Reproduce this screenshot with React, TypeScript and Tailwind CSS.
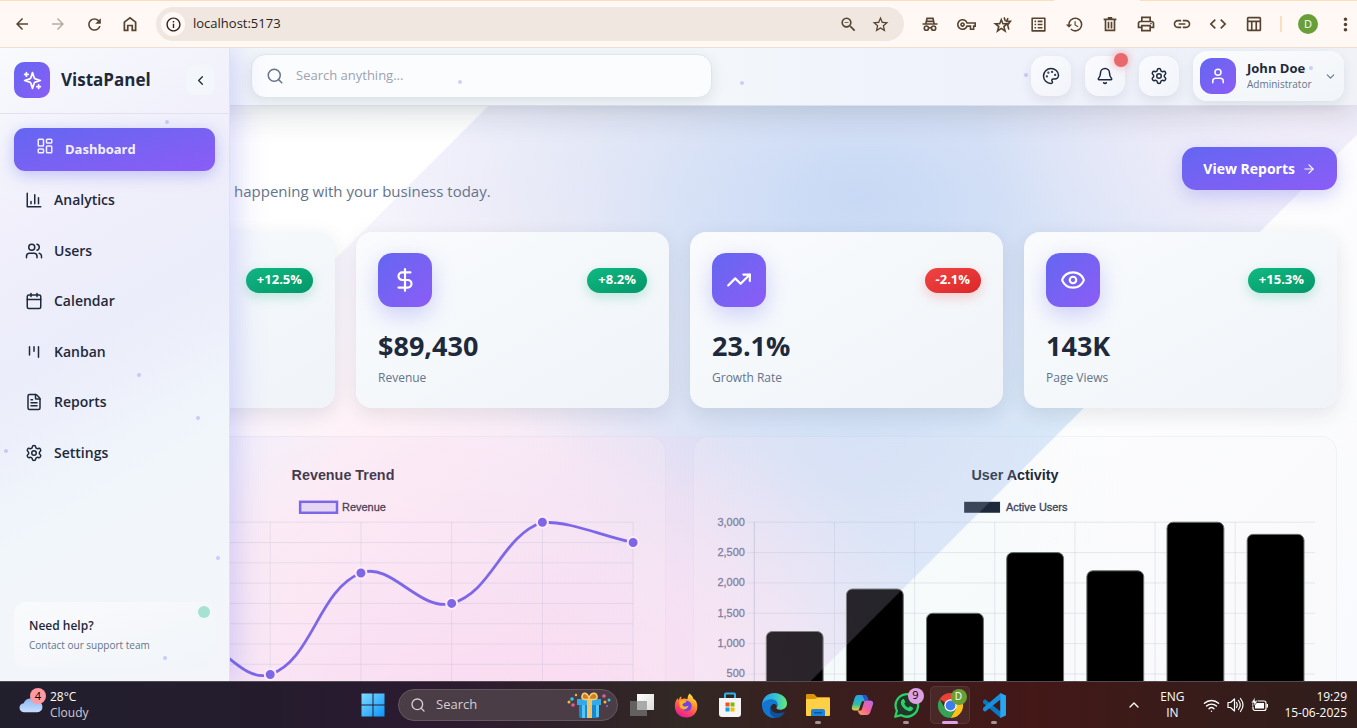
import type { ReactNode } from 'react';
import {
  ArrowRight, Bell, Calendar, ChevronDown, ChevronLeft, ChevronUp, DollarSign, Eye, FileText,
  LayoutDashboard, Palette, Search, Settings, TrendingUp, User, Users, Wifi,
} from 'lucide-react';
import {
  MdArrowBack, MdArrowForward, MdCode, MdHistory, MdInfoOutline, MdLink, MdListAlt, MdMoreVert,
  MdOutlinePrint, MdOutlineVpnKey, MdRefresh, MdStarBorder, MdZoomOut,
} from 'react-icons/md';

/* ---------- Small line icons ---------- */

function Line({ size = 18, width = 2, round = true, children }: { size?: number; width?: number; round?: boolean; children: ReactNode }) {
  return (
    <svg width={size} height={size} viewBox="0 0 24 24" fill="none" stroke="currentColor" strokeWidth={width}
      strokeLinecap={round ? 'round' : 'butt'} strokeLinejoin={round ? 'round' : 'miter'} aria-hidden="true">
      {children}
    </svg>
  );
}

const HomeIcon = () => <Line size={18} width={2.3} round={false}><path d="M4.500 20.500V9.500L12 3.800l7.500 5.700v11h-4.500V14h-6v6.500z" /></Line>;
const IncognitoIcon = () => (
  <Line size={18} width={2.2} round={false}>
    <path d="M2 12h20M6.500 11.500 8 4.500h8l1.500 7M7 8.500h10" />
    <circle cx="7.200" cy="17.500" r="2.800" /><circle cx="16.800" cy="17.500" r="2.800" /><path d="M10 17h4" />
  </Line>
);
const StarSparkIcon = () => (
  <Line size={19} width={2} round={false}>
    <path d="m10.500 6 2 5h5.500l-4.300 3.600 1.600 5.600-4.800-3.300-4.800 3.300 1.600-5.600L3 11h5.500z" />
    <path d="m14 3 1.500 4.500M19 4l-2 4h5l-3.500 4.500 1.500 6" />
  </Line>
);
const BinIcon = () => <Line size={18} width={2.2} round={false}><path d="M6 6.500V20.500h12V6.500M3.500 5.800h17M9 3.800h6M10 9v9M14 9v9" /></Line>;
const TableIcon = () => <Line size={18} width={2.2} round={false}><rect x="3.500" y="3.500" width="17" height="17" rx="1" /><path d="M3.500 8.500h17M9 8.500v12M15 8.500v12" /></Line>;
const SparklesIcon = () => (
  <Line size={21}>
    <path d="m12 3-1.912 5.813a2 2 0 0 1-1.275 1.275L3 12l5.813 1.912a2 2 0 0 1 1.275 1.275L12 21l1.912-5.813a2 2 0 0 1 1.275-1.275L21 12l-5.813-1.912a2 2 0 0 1-1.275-1.275L12 3Z" />
    <path d="M5 3v4M19 17v4M3 5h4M17 19h4" />
  </Line>
);
const AnalyticsIcon = () => <Line><path d="M3 3v18h18M18 17V9M13 17V5M8 17v-3" /></Line>;
const KanbanIcon = () => <Line><path d="M6 5v11M12 5v6M18 5v14" /></Line>;

/* ---------- Browser toolbar ---------- */

function ToolButton({ label, children, dim = false }: { label: string; children: ReactNode; dim?: boolean }) {
  return (
    <button aria-label={label} className={`flex size-9 shrink-0 items-center justify-center ${dim ? 'text-[#b5aca6]' : 'text-[#574430]'}`}>
      {children}
    </button>
  );
}

function BrowserBar() {
  return (
    <header className="relative flex h-12 shrink-0 items-center border-t border-b border-t-[#ffdcbc] border-b-[#f3ddd0] bg-[#fff8f4] pl-1">
      <div className="absolute -top-px left-[1054px] h-px w-[86px] bg-[#fff8f4]" />
      <ToolButton label="Back"><MdArrowBack size={18} /></ToolButton>
      <ToolButton label="Forward" dim><MdArrowForward size={18} /></ToolButton>
      <ToolButton label="Reload"><MdRefresh size={19} /></ToolButton>
      <ToolButton label="Home"><HomeIcon /></ToolButton>
      <div className="ml-2 flex h-[34px] flex-1 items-center rounded-full bg-[#f0e7e1] pr-2 pl-[5px]">
        <span className="flex size-6 items-center justify-center rounded-full bg-[#fff8f4] text-[#2b2320]"><MdInfoOutline size={17} /></span>
        <input aria-label="Address" defaultValue="localhost:5173" className="ml-2 min-w-0 flex-1 bg-transparent text-[13px] text-[#2a2320] outline-none" />
        <button aria-label="Zoom out" className="flex w-8 justify-center text-[#574430]"><MdZoomOut size={19} /></button>
        <button aria-label="Bookmark" className="flex w-8 justify-center text-[#574430]"><MdStarBorder size={19} /></button>
      </div>
      <div className="ml-2 flex">
        <ToolButton label="Incognito"><IncognitoIcon /></ToolButton>
        <ToolButton label="Passwords"><MdOutlineVpnKey size={19} /></ToolButton>
        <ToolButton label="Bookmarks"><StarSparkIcon /></ToolButton>
        <ToolButton label="Reading list"><MdListAlt size={19} /></ToolButton>
        <ToolButton label="History"><MdHistory size={19} /></ToolButton>
        <ToolButton label="Delete data"><BinIcon /></ToolButton>
        <ToolButton label="Print"><MdOutlinePrint size={20} /></ToolButton>
        <ToolButton label="Copy link"><MdLink size={20} /></ToolButton>
        <ToolButton label="Developer tools"><MdCode size={20} /></ToolButton>
        <ToolButton label="Side panel"><TableIcon /></ToolButton>
      </div>
      <div className="ml-2 h-4 w-0.5 bg-[#ffdcbc]" />
      <button aria-label="Profile" className="ml-4 flex size-5 items-center justify-center rounded-full bg-[#689f38] text-[11px] text-white">D</button>
      <button aria-label="More" className="ml-4 flex w-[23px] justify-center text-[#574430]"><MdMoreVert size={21} /></button>
    </header>
  );
}

/* ---------- Sidebar ---------- */

const NAV: { label: string; icon: ReactNode }[] = [
  { label: 'Analytics', icon: <AnalyticsIcon /> },
  { label: 'Users', icon: <Users size={18} /> },
  { label: 'Calendar', icon: <Calendar size={18} /> },
  { label: 'Kanban', icon: <KanbanIcon /> },
  { label: 'Reports', icon: <FileText size={18} /> },
  { label: 'Settings', icon: <Settings size={18} /> },
];

function Sidebar() {
  return (
    <aside className="absolute inset-y-0 left-0 z-20 flex w-[230px] flex-col border-r border-[#dfe3ee] bg-[linear-gradient(150deg,#f8fafd_0%,#f0effb_26%,#ebedfa_45%,#f1f6fb_66%,#f3f5fa_100%)] shadow-[6px_0_28px_rgba(99,102,241,0.26)]">
      <div className="flex h-[66px] shrink-0 items-center border-b border-[#e0e3ee] px-3.5 pb-px">
        <span className="flex size-9 items-center justify-center rounded-[10px] bg-linear-to-br from-[#6366f1] to-[#8b5cf6] text-white"><SparklesIcon /></span>
        <span className="ml-[11px] text-[17px] font-bold text-[#1e293b]">VistaPanel</span>
        <button aria-label="Collapse sidebar" className="ml-auto flex size-[29px] items-center justify-center rounded-lg bg-[#f3f6fa] text-[#1e293b]"><ChevronLeft size={15} /></button>
      </div>
      <nav className="mx-3.5 mt-3.5 flex h-[346px] shrink-0 flex-col justify-between text-sm font-semibold text-[#1e293b]">
        <a href="#dashboard" className="flex h-[43px] items-center gap-[11px] rounded-[11px] bg-linear-to-br from-[#6366f1] to-[#8b5cf6] pl-[22px] text-[13px] font-bold text-[#f3f1ff] shadow-[0_4px_16px_rgba(99,102,241,0.35)]">
          <span className="self-start pt-[9px]"><LayoutDashboard size={18} /></span>
          Dashboard
        </a>
        {NAV.map((item) => (
          <a key={item.label} href={`#${item.label.toLowerCase()}`} className="flex h-[43px] items-center gap-[11px] pl-[11px]">
            {item.icon}
            {item.label}
          </a>
        ))}
      </nav>
      <div className="relative mx-3.5 mt-auto mb-[13px] rounded-xl bg-linear-to-br from-[#f9fafc] to-[#f1f5f9] px-[15px] py-3.5">
        <span className="absolute top-1 right-[5px] size-3 rounded-full bg-[#a5e3d0]" />
        <p className="text-xs leading-5 font-semibold text-[#1e293b]">Need help?</p>
        <p className="text-[10px] leading-[18px] text-[#64748b]">Contact our support team</p>
      </div>
    </aside>
  );
}

/* ---------- App header ---------- */

const ICON_BUTTON = 'flex size-10 items-center justify-center rounded-[14px] bg-linear-to-br from-[#fafbfe] to-[#f1f4fa] text-[#1e293b] shadow-[0_4px_12px_rgba(30,41,59,0.09)]';

function TopBar() {
  return (
    <header className="relative z-10 flex h-[58px] items-center border-b border-[#dbe1ec] bg-[linear-gradient(90deg,#f3f7fa_0%,#f3f7fa_52%,#f0f3fc_65%,#eef0fa_80%,#f0f2f8_100%)] pr-[13px] pb-px pl-[251px] shadow-[0_8px_30px_rgba(30,41,59,0.16)]">
      <label className="flex h-11 w-[461px] items-center gap-3 rounded-[14px] border border-[#dde6ef] bg-[#fbfcfe] px-[14px] text-[#64748b] shadow-[0_4px_14px_rgba(30,41,59,0.10)]">
        <Search size={18} />
        <input placeholder="Search anything..." aria-label="Search anything" className="min-w-0 flex-1 bg-transparent text-[13px] outline-none placeholder:text-[#9ca3af]" />
      </label>
      <div className="ml-auto flex items-center gap-3.5">
        <button aria-label="Theme" className={ICON_BUTTON}><Palette size={18} /></button>
        <button aria-label="Notifications" className={`relative ${ICON_BUTTON}`}>
          <Bell size={18} />
          <span className="absolute -top-[3px] -right-[3px] size-3.5 rounded-full bg-[#e9686c] shadow-[0_0_8px_rgba(239,68,68,0.5)]" />
        </button>
        <button aria-label="Settings" className={ICON_BUTTON}><Settings size={18} /></button>
        <button className="flex h-[50px] items-center rounded-[14px] bg-linear-to-br from-[#fafbfd] to-[#f1f5f9] px-[7px] text-left shadow-[0_4px_12px_rgba(30,41,59,0.09)]">
          <span className="flex size-9 items-center justify-center rounded-xl bg-linear-to-br from-[#6366f1] to-[#8b5cf6] text-white"><User size={18} /></span>
          <span className="ml-[11px] w-[72px]">
            <span className="block text-[13px] leading-4 font-bold whitespace-nowrap text-[#1e293b]">John Doe</span>
            <span className="block text-[10px] leading-4 text-[#64748b]">Administrator</span>
          </span>
          <ChevronDown size={13} className="ml-[5px] text-[#64748b]" />
        </button>
      </div>
    </header>
  );
}

/* ---------- Stat cards ---------- */

type Stat = { icon: ReactNode; change: string; up: boolean; value: string; label: string };

const STATS: Stat[] = [
  { icon: <DollarSign size={26} />, change: '+8.2%', up: true, value: '$89,430', label: 'Revenue' },
  { icon: <TrendingUp size={26} />, change: '-2.1%', up: false, value: '23.1%', label: 'Growth Rate' },
  { icon: <Eye size={26} />, change: '+15.3%', up: true, value: '143K', label: 'Page Views' },
];

function Badge({ up, children }: { up: boolean; children: ReactNode }) {
  return (
    <span className={`ml-auto flex h-[25px] items-center rounded-full px-[11px] text-[13px] font-bold text-white ${up
      ? 'bg-linear-to-br from-[#10b981] to-[#059669] shadow-[0_4px_12px_rgba(16,185,129,0.25)]'
      : 'bg-linear-to-br from-[#ef4444] to-[#dc2626] shadow-[0_4px_12px_rgba(239,68,68,0.25)]'}`}>
      {children}
    </span>
  );
}

const CARD = 'h-44 rounded-2xl bg-linear-to-br from-[#fafbfd] via-[#f4f8fb] to-[#f0f3f8] px-[22px] pt-[21px] shadow-[0_6px_20px_rgba(30,41,59,0.11)]';

function StatCard({ stat }: { stat: Stat }) {
  return (
    <section className={CARD}>
      <div className="flex h-[54px] items-center">
        <span className="flex size-[54px] items-center justify-center rounded-[14px] bg-linear-to-br from-[#6366f1] to-[#8b5cf6] text-white shadow-[0_8px_22px_rgba(99,102,241,0.28)]">{stat.icon}</span>
        <Badge up={stat.up}>{stat.change}</Badge>
      </div>
      <p className="mt-[21px] text-[27px] leading-9 font-bold text-[#1e293b]">{stat.value}</p>
      <p className="mt-1 text-xs leading-5 text-[#64748b]">{stat.label}</p>
    </section>
  );
}

/* ---------- Charts ---------- */

const PANEL = 'overflow-hidden rounded-2xl border border-[#94a3b8]/10 bg-[#f8fafc]/20';
const CHART_FONT = "font-['Liberation_Sans',sans-serif]";
const TOP = 85;

type Point = { x: number; y: number };

function smoothPath(points: Point[], top: number): string {
  const tension = 0.4;
  const handles = points.map((p, i) => {
    const prev = points[Math.max(0, i - 1)];
    const next = points[Math.min(points.length - 1, i + 1)];
    const d1 = Math.hypot(p.x - prev.x, p.y - prev.y);
    const d2 = Math.hypot(next.x - p.x, next.y - p.y);
    const a = (tension * d1) / (d1 + d2);
    const b = (tension * d2) / (d1 + d2);
    return {
      before: { x: p.x - a * (next.x - prev.x), y: Math.max(top, p.y - a * (next.y - prev.y)) },
      after: { x: p.x + b * (next.x - prev.x), y: Math.max(top, p.y + b * (next.y - prev.y)) },
    };
  });
  return points.reduce((d, p, i) => {
    if (i === 0) return `M${p.x} ${p.y}`;
    const c1 = handles[i - 1].after;
    const c2 = handles[i].before;
    return `${d}C${c1.x} ${c1.y} ${c2.x} ${c2.y} ${p.x} ${p.y}`;
  }, '');
}

const REVENUE = [12000, 19000, 15000, 25000, 22000, 30000, 28000];
const USERS = [1200, 1900, 1500, 2500, 2200, 3000, 2800];

function RevenueChart() {
  const left = 66;
  const step = 91;
  const points = REVENUE.map((v, i) => ({ x: left + i * step, y: TOP + 0.5 + (30000 - v) * 0.01018 }));
  const line = smoothPath(points, TOP + 0.5);
  return (
    <section className={PANEL}>
      <svg viewBox="0 0 644 320" className={`block w-full ${CHART_FONT}`} role="img" aria-label="Revenue trend line chart">
        <defs>
          <linearGradient id="area" x1="0" y1="0" x2="1" y2="1">
            <stop offset="0" stopColor="#8b5cf6" stopOpacity="0.01" /><stop offset="1" stopColor="#a855f7" stopOpacity="0.02" />
          </linearGradient>
        </defs>
        <text x="321" y="43" textAnchor="middle" fontSize="14.400" fontWeight="700" fill="#1e1a30">Revenue Trend</text>
        <rect x="278" y="65" width="37" height="11" fill="#e4d8f3" stroke="#6352e6" strokeWidth="2.500" />
        <text x="320" y="74" fontSize="11" fill="#251f38" stroke="#251f38" strokeWidth="0.300">Revenue</text>
        <g stroke="#94a3b8" strokeOpacity="0.220">
          {Array.from({ length: 12 }, (_, i) => <path key={i} d={`M${left} ${TOP + 0.5 + i * 20.36}H612`} />)}
          {points.map((p) => <path key={p.x} d={`M${p.x} ${TOP}V320`} />)}
        </g>
        <path d={`${line}V320H${left}Z`} fill="url(#area)" />
        <path d={line} fill="none" stroke="#6352e6" strokeWidth="2.800" />
        {points.map((p) => <circle key={p.x} cx={p.x} cy={p.y} r="5.500" fill="#6352e6" stroke="#fff0fc" strokeWidth="2" />)}
      </svg>
    </section>
  );
}

function ActivityChart() {
  const left = 60.5;
  const step = 80.4;
  return (
    <section className={PANEL}>
      <svg viewBox="0 0 644 320" className={`block w-full ${CHART_FONT}`} role="img" aria-label="User activity bar chart">
        <text x="322" y="43" textAnchor="middle" fontSize="14.400" fontWeight="700" fill="#1e293b">User Activity</text>
        <rect x="271" y="65" width="36" height="11" fill="#1e293b" />
        <text x="313" y="74" fontSize="11" fill="#374359" stroke="#374359" strokeWidth="0.300">Active Users</text>
        <g stroke="#94a3b8" strokeOpacity="0.220">
          {[0, 1, 2, 3, 4, 5].map((i) => <path key={i} d={`M${left - 7} ${TOP + 0.5 + i * 30.45}H623`} />)}
          {[1, 2, 3, 4, 5, 6].map((i) => <path key={i} d={`M${left + i * step} ${TOP}V320`} />)}
          <path d={`M${left} ${TOP}V320`} strokeOpacity="0.450" />
        </g>
        <g fontSize="11" fill="#67708f" stroke="#67708f" strokeWidth="0.300" textAnchor="end">
          {['3,000', '2,500', '2,000', '1,500', '1,000', '500'].map((t, i) => <text key={t} x="51" y={TOP + 4 + i * 30.45}>{t}</text>)}
        </g>
        {USERS.map((v, i) => (
          <rect key={i} x={left + 12 + i * step} y={TOP + 0.5 + (3000 - v) * 0.0609} width="57" height="300" rx="6" fill="#000" stroke="#667068" strokeWidth="1" />
        ))}
      </svg>
    </section>
  );
}

/* ---------- Ambient background ---------- */

const PARTICLES = [
  { x: 167, y: 74 }, { x: 139, y: 327 }, { x: 198, y: 370 }, { x: 6, y: 403 }, { x: 218, y: 510 },
  { x: 165, y: 610 }, { x: 460, y: 34 }, { x: 742, y: 35 }, { x: 1026, y: 27 }, { x: 1311, y: 20 },
];

function Backdrop() {
  return (
    <div className="absolute inset-0 bg-[linear-gradient(135deg,#ffffff_0%,#fefefe_60%,#f9fafd_100%)]">
      <div className="absolute inset-0 bg-[radial-gradient(ellipse_400px_340px_at_740px_540px,#dcf6f266_0%,transparent_100%)]" />
      <div className="absolute inset-0 bg-[radial-gradient(ellipse_330px_260px_at_1310px_60px,#f4effb_0%,#eeebf9cc_50%,transparent_100%),radial-gradient(ellipse_500px_320px_at_860px_150px,#c8d9f5_0%,#d2e0f6cc_40%,transparent_100%),radial-gradient(ellipse_460px_330px_at_520px_680px,#ffd8ee_0%,#fde3f299_55%,transparent_100%),radial-gradient(ellipse_300px_300px_at_860px_380px,#d0e0f5_0%,transparent_100%),linear-gradient(135deg,#f7f4fc_28%,#fff2f7_38%,#f8eef8_44%,#e7e6f6_56%,#e0f0fb_72%)] [mask-image:linear-gradient(135deg,transparent_27.4%,black_27.5%,black_72.5%,transparent_72.6%)]" />
    </div>
  );
}

function Dashboard() {
  return (
    <div className="relative min-h-0 flex-1 overflow-hidden">
      <Backdrop />
      <Sidebar />
      <div className="relative">
        <TopBar />
        <main className="pr-5 pl-[22px]">
          <div className="flex h-[126px] items-end justify-between pl-[212px]">
            <p className="pb-[29px] text-[15px] leading-6 text-[#64748b]">happening with your business today.</p>
            <button className="mb-[42px] flex h-[43px] items-center gap-[7px] rounded-[14px] bg-linear-to-br from-[#6366f1] to-[#8b5cf6] px-[21px] text-sm font-bold text-white shadow-[0_6px_18px_rgba(99,102,241,0.28)]">
              View Reports <ArrowRight size={14} />
            </button>
          </div>
          <div className="grid grid-cols-4 gap-[21px]">
            <section className={CARD}>
              <div className="flex h-[54px] items-center"><Badge up>+12.5%</Badge></div>
            </section>
            {STATS.map((stat) => <StatCard key={stat.label} stat={stat} />)}
          </div>
          <div className="relative mt-7 grid grid-cols-2 gap-[27px]">
            <RevenueChart />
            <ActivityChart />
          </div>
        </main>
      </div>
      <div className="pointer-events-none absolute inset-x-0 top-[388px] bottom-0 overflow-hidden">
        <div className="absolute inset-x-0 bottom-0 h-[633px] bg-[radial-gradient(circle_at_520px_640px,#ffd4f02c_0px,#ffd0f02c_240px,#d4d4f82c_380px,#c4d8fa2c_600px)] [mask-image:linear-gradient(135deg,transparent_27.4%,black_27.5%,black_72.5%,transparent_72.6%)]" />
      </div>
      <div className="pointer-events-none absolute inset-0 z-30">
        {PARTICLES.map((p) => (
          <span key={p.x} className="absolute size-1 rounded-full bg-[#8b8df5]/40" style={{ left: p.x - 2, top: p.y - 2 }} />
        ))}
      </div>
    </div>
  );
}

/* ---------- Taskbar ---------- */

const Windows = () => (
  <svg width="24" height="24" viewBox="0 0 24 24" aria-hidden="true">
    <defs><linearGradient id="win" x1="0" y1="0" x2="1" y2="1"><stop stopColor="#7fdcff" /><stop offset="1" stopColor="#0a94fa" /></linearGradient></defs>
    <path fill="url(#win)" d="M.5.5h11v11H.5zM12.500.5h11v11h-11zM.5 12.500h11v11H.5zM12.500 12.500h11v11h-11z" />
  </svg>
);
const Gift = () => (
  <svg width="44" height="28" viewBox="0 0 44 28" aria-hidden="true">
    <path d="M12 11h20v14q0 2-2 2H14q-2 0-2-2z" fill="#1688cf" /><path d="M10 8h24v6H10z" fill="#35a9e8" /><path d="M15 14h3v13h-3zM29 14h3v12h-3z" fill="#57c2f5" />
    <path d="M20 8h5v19h-5z" fill="#f5c162" />
    <path d="M22 8c-3 1-8 1-7-3s5-4 7 2c2-6 7-6 8-2s-4 4-8 3z" fill="#c98224" stroke="#ffcd70" strokeWidth="1.500" />
    <g><circle cx="5" cy="8" r="1.800" fill="#35c9e8" /><circle cx="2" cy="11" r="1.500" fill="#f4b840" /><circle cx="6" cy="14" r="1.800" fill="#e75a9a" /><circle cx="9" cy="4" r="1.200" fill="#f4b840" /><circle cx="37" cy="5" r="1.800" fill="#e75a9a" /><circle cx="42" cy="9" r="1.500" fill="#35c9e8" /><circle cx="38" cy="11" r="1.500" fill="#f4b840" /><circle cx="40" cy="15" r="1" fill="#9d65dd" /></g>
  </svg>
);
const TaskView = () => (
  <svg width="26" height="24" viewBox="0 0 26 24" aria-hidden="true">
    <defs><linearGradient id="tv" x1="0" y1="0" x2="1" y2="1"><stop stopColor="#fff" /><stop offset="1" stopColor="#dcdcdc" /></linearGradient></defs>
    <path d="M1 8h17v15H1z" fill="#62615f" /><path d="M8 1h17v16H8z" fill="url(#tv)" /><path d="M8 8h10v9H8z" fill="#aaa" />
  </svg>
);
const Firefox = () => (
  <svg width="25" height="25" viewBox="0 0 24 24" aria-hidden="true">
    <defs><linearGradient id="ff" x1=".8" y1="0" x2=".3" y2="1"><stop stopColor="#fff24a" /><stop offset=".35" stopColor="#ff9c28" /><stop offset=".7" stopColor="#ff4560" /><stop offset="1" stopColor="#e3189c" /></linearGradient></defs>
    <path d="M15 .5c2 2 3 3 3.500 5 1 .5 2 1 3 3 3 8-2 15-9.500 15C5 23.500.5 18.500.8 12 1 8 2.500 6 3.500 5l1 2C5 4.500 6 3.500 7 3v3c2-1 4-1 6 0 0-2 .5-4 2-5.500z" fill="url(#ff)" />
    <circle cx="12" cy="12.500" r="5" fill="#7542e5" /><path d="M5 8c3-2 5-1 7 0-1 2-3 1.500-4 3 1 3 4 2 6 1-1 4-6 5-8 2-1-2-1-4-1-6z" fill="#ffb52a" />
  </svg>
);
const Store = () => (
  <svg width="24" height="26" viewBox="0 0 24 26" aria-hidden="true">
    <path d="M7 7V2.500q0-1 1-1h8q1 0 1 1V7" fill="none" stroke="#2eb5f0" strokeWidth="2" /><path d="M1 6h22v16q0 3-3 3H4q-3 0-3-3z" fill="#f5f5f5" />
    <path fill="#f25022" d="M7.500 10.500h4v4h-4z" /><path fill="#7fba00" d="M12.500 10.500h4v4h-4z" /><path fill="#00a4ef" d="M7.500 15.500h4v4h-4z" /><path fill="#ffb900" d="M12.500 15.500h4v4h-4z" />
  </svg>
);
const Edge = () => (
  <svg width="25" height="25" viewBox="0 0 24 24" aria-hidden="true">
    <defs><linearGradient id="ed" x1="0" x2="1"><stop stopColor="#279be9" /><stop offset=".55" stopColor="#35c2d5" /><stop offset="1" stopColor="#66eb6e" /></linearGradient></defs>
    <path d="M12 0C19 0 24 5 24 10c0 4-3 6-6.500 6-3 0-4-1-3.500-2 1-2 0-5-4-5-5 0-10 4-10 3C0 5 5 0 12 0z" fill="url(#ed)" />
    <path d="M0 12C1 8 5 6 9 6c4 0 7 3 6 7-1-2-3-3-5-2-4 3-2 11 4 13C6 25 0 19 0 12z" fill="#1377cf" />
    <path d="M8.500 13c0 6 6 8 13.500 5-2 4-5 6-9 6-5-1-7-7-4.500-11z" fill="#0d519f" />
  </svg>
);
const Explorer = () => (
  <svg width="26" height="24" viewBox="0 0 26 24" aria-hidden="true">
    <path d="M1 2q0-1 1-1h7l3 3h12q1 0 1 1v6H1z" fill="#d9940c" /><path d="M1 6h9l2-1h12q1 0 1 1v16q0 1-1 1H2q-1 0-1-1z" fill="#ffcf45" />
    <path d="M6 23v-5q0-2 2-2h10q2 0 2 2v5z" fill="#1b83d8" /><path d="M9 19h8v1.500H9z" fill="#0a579e" />
  </svg>
);
const Copilot = () => (
  <svg width="23" height="22" viewBox="0 0 25 24" aria-hidden="true">
    <defs>
      <linearGradient id="ca" x1="0" y1="0" x2="0" y2="1"><stop stopColor="#2b9cf3" /><stop offset=".6" stopColor="#29c0a1" /><stop offset="1" stopColor="#f0cb38" /></linearGradient>
      <linearGradient id="cb" x1="1" y1="0" x2="0" y2="1"><stop stopColor="#b46bf2" /><stop offset=".5" stopColor="#f0609c" /><stop offset="1" stopColor="#ffa24d" /></linearGradient>
    </defs>
    <path d="M7 1h8q2 0 3 3l1 3h-4q-2 0-3 3l-2 6q-1 2-3 2H4q-4 0-3-4L4 4q1-3 3-3z" fill="url(#ca)" />
    <path d="M18 23h-7q-2 0-3-3l-1-2q3 0 4-3l2-6q1-2 3-2h4q5 0 4 4l-3 9q-1 3-3 3z" fill="url(#cb)" /><path d="M12 1h3q2 0 3 3l1 3h-4q-2-4-3-6z" fill="#2157ce" />
    <path d="M14.500 8h-1.500q-1.500 0-2 2l-2 6q-.5 1.500-1.500 2h2.500q1.500 0 2-2z" fill="#3a2222" />
  </svg>
);
const WhatsApp = () => (
  <svg width="27" height="27" viewBox="0 0 24 24" aria-hidden="true">
    <path d="M2 22l1.500-5.300A10 10 0 1 1 7.300 20.600z" fill="#24352a" stroke="#25d366" strokeWidth="2" strokeLinejoin="round" />
    <path d="M8.500 6.500c1-.5 1.500 0 2 1.500.5 1 .2 1.500-.5 2.500 1 1.800 2 2.700 3.700 3.500 1-1 1.300-1.500 2-1.200 2 1 2.500 1 2 2.200-.5 1.500-2 2-3.200 2C11 16.500 7 12.500 7 9.500c0-1.500.8-2.600 1.500-3z" fill="#25d366" />
  </svg>
);
const Chrome = () => (
  <svg width="25" height="25" viewBox="0 0 24 24" aria-hidden="true">
    <path d="M12 12 1.600 6A12 12 0 0 1 22.400 6z" fill="#e94235" /><path d="M12 12V0a12 12 0 0 1 10.400 6z" fill="#e94235" />
    <path d="M12 6h10.400A12 12 0 0 1 12 24l5.200-9z" fill="#fbc116" /><path d="m1.600 6 5.200 9a6 6 0 0 0 10.400 0L12 24A12 12 0 0 1 1.600 6z" fill="#34a353" />
    <circle cx="12" cy="12" r="6" fill="#fff" /><circle cx="12" cy="12" r="4.700" fill="#3b7ded" />
  </svg>
);
const VsCode = () => (
  <svg width="25" height="25" viewBox="0 0 24 24" aria-hidden="true">
    <path d="M1 7.500 3 6l15 12v6L1 9.500z" fill="#0879c4" /><path d="M1 16.500 3 18 18 6V0L1 14.500z" fill="#1690dc" /><path d="m17.500 0 5.500 2.500v19L17.500 24z" fill="#26a7f2" />
  </svg>
);

function AppButton({ label, children, dot = false, active = false }: { label: string; children: ReactNode; dot?: boolean; active?: boolean }) {
  return (
    <button aria-label={label} className="relative flex h-full w-11 items-center justify-center">
      {active && <span className="absolute inset-x-0.5 inset-y-1 rounded-[5px] border border-white/8 bg-white/6" />}
      <span className="relative">{children}</span>
      {dot && <span className="absolute bottom-1 h-[3px] w-1.5 rounded-full bg-[#a39394]" />}
      {active && <span className="absolute bottom-1 h-[3px] w-4 rounded-full bg-[#e0a2e6]" />}
    </button>
  );
}

function Taskbar() {
  return (
    <footer className="grid h-[47px] shrink-0 grid-cols-[1fr_auto_1fr] items-center border-t border-[#514a50] bg-[linear-gradient(90deg,#221f2d_0%,#241c2d_20%,#2c1a31_32%,#322824_50%,#3b1d1d_63%,#431817_76%,#371c1a_88%,#2f1e1c_100%)] pl-2.5 text-xs text-white">
      <button className="flex items-center text-left">
        <span className="relative ml-2 w-8">
          <svg width="26" height="22" viewBox="0 0 26 24" aria-hidden="true">
            <defs><linearGradient id="cl" x1="0" y1="0" x2="0" y2="1"><stop stopColor="#8ab6ef" /><stop offset="1" stopColor="#cadeff" /></linearGradient></defs>
            <path d="M6 20a5 5 0 0 1-1-10 8 8 0 0 1 14-2 6 6 0 0 1 1 12z" fill="url(#cl)" />
          </svg>
          <span className="absolute -top-1.5 left-3 flex size-4 items-center justify-center rounded-full bg-[#ff99a4] text-[11px] text-black">4</span>
        </span>
        <span className="leading-4">28°C<br /><span className="text-[#cfcbd1]">Cloudy</span></span>
      </button>
      <div className="flex h-[46px] items-center">
        <AppButton label="Start"><Windows /></AppButton>
        <button className="mr-0.5 ml-[3px] flex h-8 w-[220px] items-center rounded-full border border-[#66565f] bg-[#4a3d45] pr-1.5 pl-[11px] text-[13px] text-[#d6ced3]">
          <Search size={16} className="mr-2.5" />Search
          <span className="ml-auto"><Gift /></span>
        </button>
        <AppButton label="Task view"><TaskView /></AppButton>
        <AppButton label="Firefox"><Firefox /></AppButton>
        <AppButton label="Store"><Store /></AppButton>
        <AppButton label="Edge"><Edge /></AppButton>
        <AppButton label="File Explorer" dot><Explorer /></AppButton>
        <AppButton label="Copilot"><Copilot /></AppButton>
        <AppButton label="WhatsApp" dot>
          <WhatsApp />
          <span className="absolute -top-1 -right-1 flex size-4 items-center justify-center rounded-full bg-[#df9fe3] text-[11px] text-black">9</span>
        </AppButton>
        <AppButton label="Chrome" active>
          <Chrome />
          <span className="absolute -top-1 -right-1 flex size-4 items-center justify-center rounded-full bg-[#689f38] text-[10px] text-white">D</span>
        </AppButton>
        <AppButton label="Visual Studio Code" dot><VsCode /></AppButton>
      </div>
      <div className="flex items-center justify-end pr-2.5">
        <button aria-label="Hidden icons"><ChevronUp size={16} /></button>
        <button className="ml-4 w-[28px] text-center leading-4">ENG IN</button>
        <button aria-label="Network, volume and battery" className="mr-4 ml-[17px] flex items-center gap-[7px]">
          <Wifi size={17} />
          <svg width="17" height="16" viewBox="0 0 17 16" fill="none" stroke="currentColor" strokeWidth="1.200" strokeLinecap="round" strokeLinejoin="round" aria-hidden="true">
            <path d="M1 5.500h2.500L7.500 2v12l-4-3.500H1zM9.500 5.500q1.500 2.500 0 5M11.500 3.500q3.500 4.500 0 9M13.500 1.500q5 6.500 0 13" />
          </svg>
          <svg width="17" height="16" viewBox="0 0 17 16" aria-hidden="true">
            <rect x="2" y="4" width="13" height="9.500" rx="2" fill="none" stroke="#fff" strokeWidth="1.200" /><path d="M4 6h9v5.500H4zM15.500 7H17v3.500h-1.500z" fill="#fff" /><path d="M4 0 0 6h3l-1 4 5-6H4z" fill="#fff" stroke="#321d1b" strokeWidth=".7" />
          </svg>
        </button>
        <button className="text-right leading-4 whitespace-nowrap">19:29<br />15-06-2025</button>
      </div>
    </footer>
  );
}

export default function App() {
  return (
    <div className="flex h-screen flex-col overflow-hidden font-['Open_Sans','Noto_Sans',sans-serif]">
      <BrowserBar />
      <Dashboard />
      <Taskbar />
    </div>
  );
}
